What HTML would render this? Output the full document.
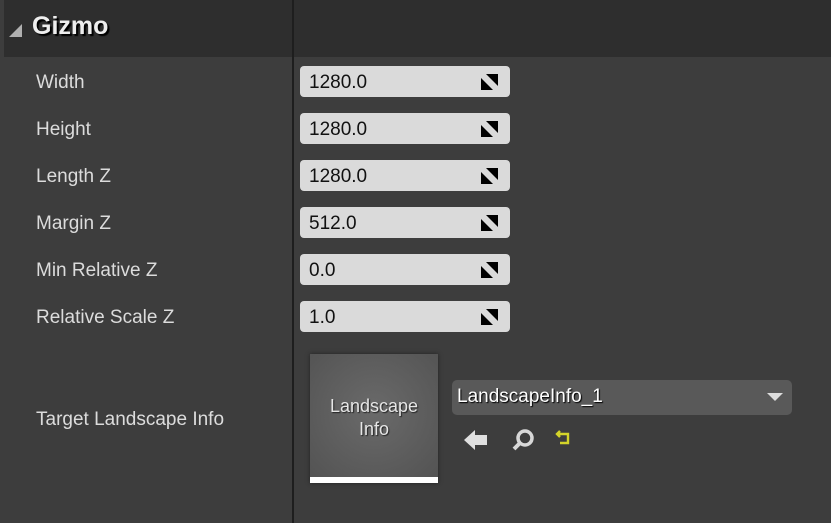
<!DOCTYPE html>
<html><head><style>
body{margin:0;width:831px;height:523px;background:#3d3d3d;font-family:"Liberation Sans",sans-serif;position:relative;overflow:hidden}
.hdr{position:absolute;left:4px;top:0;width:827px;height:57px;background:#2e2e2e}
.div{position:absolute;left:292px;top:0;width:2px;height:523px;background:#1e1e1e}
.t{position:absolute;color:#e4e4e4;font-size:19px}
.lbl{position:absolute;left:36px;color:#dcdcdc;font-size:19px}
.in{position:absolute;left:300px;width:210px;height:31px;background:#dadada;border-radius:4px}
.in span{position:absolute;left:9px;top:6px;font-size:19px;color:#111}
.in svg{position:absolute;left:181px;top:8px}
</style></head><body>
<div class="hdr"></div>
<div class="div"></div>
<svg style="position:absolute;left:9px;top:24px" width="14" height="14"><polygon points="13,0 13,13 0,13" fill="#b0b0b0"/></svg>
<div class="t" style="left:32px;top:12px;font-size:25px;font-weight:bold;color:#eee;text-shadow:2px 2px 1px #000">Gizmo</div>
<div class="lbl" style="top:72px">Width</div>
<div class="lbl" style="top:119px">Height</div>
<div class="lbl" style="top:166px">Length Z</div>
<div class="lbl" style="top:213px">Margin Z</div>
<div class="lbl" style="top:260px">Min Relative Z</div>
<div class="lbl" style="top:307px">Relative Scale Z</div>
<div class="lbl" style="top:409px">Target Landscape Info</div>
<div class="in" style="top:66px"><span>1280.0</span><svg width="17" height="16"><polygon points="5,0 17,0 17,12" fill="#000"/><polygon points="0,4 0,16 12,16" fill="#000"/></svg></div>
<div class="in" style="top:113px"><span>1280.0</span><svg width="17" height="16"><polygon points="5,0 17,0 17,12" fill="#000"/><polygon points="0,4 0,16 12,16" fill="#000"/></svg></div>
<div class="in" style="top:160px"><span>1280.0</span><svg width="17" height="16"><polygon points="5,0 17,0 17,12" fill="#000"/><polygon points="0,4 0,16 12,16" fill="#000"/></svg></div>
<div class="in" style="top:207px"><span>512.0</span><svg width="17" height="16"><polygon points="5,0 17,0 17,12" fill="#000"/><polygon points="0,4 0,16 12,16" fill="#000"/></svg></div>
<div class="in" style="top:254px"><span>0.0</span><svg width="17" height="16"><polygon points="5,0 17,0 17,12" fill="#000"/><polygon points="0,4 0,16 12,16" fill="#000"/></svg></div>
<div class="in" style="top:301px"><span>1.0</span><svg width="17" height="16"><polygon points="5,0 17,0 17,12" fill="#000"/><polygon points="0,4 0,16 12,16" fill="#000"/></svg></div>
<div style="position:absolute;left:310px;top:354px;width:128px;height:129px;background:radial-gradient(circle at 50% 45%,#6a6a6a,#525252);box-shadow:0 0 4px #222">
<div style="position:absolute;left:0;right:0;top:41px;text-align:center;color:#e6e6e6;font-size:18px;line-height:23px;text-shadow:1px 1px 1px #222">Landscape<br>Info</div>
<div style="position:absolute;left:0;right:0;bottom:0;height:6px;background:#fff"></div></div>
<div style="position:absolute;left:452px;top:380px;width:340px;height:35px;background:#595959;border-radius:5px">
<span style="position:absolute;left:5px;top:6px;font-size:19px;color:#fff;text-shadow:1px 1px 1px #000">LandscapeInfo_1</span>
<svg style="position:absolute;left:315px;top:13px" width="16" height="9"><polygon points="0,0 16,0 8,8" fill="#ddd"/></svg></div>
<svg style="position:absolute;left:463px;top:428px" width="26" height="24"><polygon points="1,12 12,2 12,7 24,7 24,17 12,17 12,22" fill="#e0e0e0"/></svg>
<svg style="position:absolute;left:511px;top:428px" width="26" height="24"><circle cx="14" cy="10" r="7" fill="none" stroke="#d8d8d8" stroke-width="3.5"/><line x1="9" y1="15" x2="3" y2="21" stroke="#d8d8d8" stroke-width="4"/></svg>
<svg style="position:absolute;left:555px;top:430px" width="18" height="16"><path d="M5 1 L2 4 L5 7 M2 4 H13 V13 H5" fill="none" stroke="#d4d42a" stroke-width="2.4"/></svg>
</body></html>
